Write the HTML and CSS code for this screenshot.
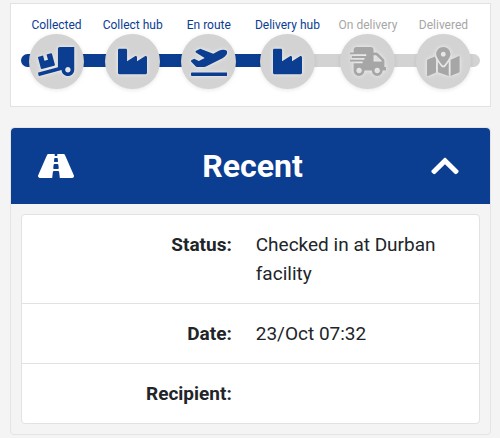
FILE: index.html
```
<!DOCTYPE html>
<html lang="en">
<head>
    <meta charset="UTF-8">
    <meta name="viewport" content="width=device-width, initial-scale=1.0">
    <title>Track shipment</title>
    <link rel="stylesheet" href="styles.css">
</head>
<body>

<section class="tracker">
    <div class="track"></div>
    <ol class="steps">
        <li class="step done">
            <span class="step-label">Collected</span>
            <span class="step-icon">
                <svg viewBox="0 0 640 512"><path d="M50.2 375.6c2.3 8.5 11.1 13.6 19.6 11.3l216.4-58c8.5-2.3 13.6-11.1 11.3-19.6l-49.7-185.5c-2.3-8.5-11.1-13.6-19.6-11.3L151 133.3l24.8 92.7-61.8 16.5-24.8-92.7-77.3 20.7C3.4 172.8-1.7 181.6.6 190.1l49.6 185.5zM384 0c-17.7 0-32 14.3-32 32v323.6L5.9 450c-4.3 1.2-6.8 5.6-5.6 9.8l12.6 46.3c1.2 4.3 5.6 6.8 9.8 5.6l393.7-107.4C418.8 464.1 467.6 512 528 512c61.9 0 112-50.1 112-112V0H384zm144 448c-26.5 0-48-21.5-48-48s21.5-48 48-48 48 21.5 48 48-21.5 48-48 48z"/></svg>
            </span>
        </li>
        <li class="step done">
            <span class="step-label">Collect hub</span>
            <span class="step-icon">
                <svg viewBox="0 0 512 512"><path d="M475.115 163.781L336 252.309v-68.28c0-18.916-20.931-30.399-36.885-20.248L160 252.309V56c0-13.255-10.745-24-24-24H24C10.745 32 0 42.745 0 56v400c0 13.255 10.745 24 24 24h464c13.255 0 24-10.745 24-24V184.029c0-18.917-20.931-30.399-36.885-20.248z"/></svg>
            </span>
        </li>
        <li class="step done">
            <span class="step-label">En route</span>
            <span class="step-icon">
                <svg viewBox="0 0 640 512"><path d="M624 448H16c-8.84 0-16 7.16-16 16v32c0 8.84 7.16 16 16 16h608c8.84 0 16-7.16 16-16v-32c0-8.84-7.16-16-16-16zM80.55 341.27c6.28 6.84 15.1 10.72 24.33 10.71l130.54-.18a65.62 65.62 0 0 0 29.64-7.12l290.96-147.65c26.74-13.57 50.71-32.94 67.02-58.31 18.31-28.48 20.3-49.09 13.07-63.65-7.21-14.57-24.74-25.27-58.25-27.45-29.85-1.94-59.54 5.92-86.28 19.48l-98.51 49.99-218.7-82.06a17.799 17.799 0 0 0-18-1.11L90.62 67.29c-10.67 5.41-13.25 19.65-5.17 28.53l156.22 98.1-103.21 52.37-72.35-36.47a17.804 17.804 0 0 0-16.07.02L9.91 230.22c-10.44 5.3-13.19 19.12-5.57 28.08l76.21 82.97z"/></svg>
            </span>
        </li>
        <li class="step done" aria-current="step">
            <span class="step-label">Delivery hub</span>
            <span class="step-icon">
                <svg viewBox="0 0 512 512"><path d="M475.115 163.781L336 252.309v-68.28c0-18.916-20.931-30.399-36.885-20.248L160 252.309V56c0-13.255-10.745-24-24-24H24C10.745 32 0 42.745 0 56v400c0 13.255 10.745 24 24 24h464c13.255 0 24-10.745 24-24V184.029c0-18.917-20.931-30.399-36.885-20.248z"/></svg>
            </span>
        </li>
        <li class="step">
            <span class="step-label">On delivery</span>
            <span class="step-icon">
                <svg viewBox="0 0 640 512"><path d="M624 352h-16V243.9c0-12.7-5.1-24.9-14.1-33.9L494 110.1c-9-9-21.2-14.1-33.9-14.1H416V48c0-26.5-21.5-48-48-48H112C85.5 0 64 21.5 64 48v48H8c-4.4 0-8 3.6-8 8v16c0 4.4 3.6 8 8 8h272c4.4 0 8 3.6 8 8v16c0 4.4-3.6 8-8 8H40c-4.4 0-8 3.6-8 8v16c0 4.4 3.6 8 8 8h208c4.4 0 8 3.6 8 8v16c0 4.4-3.6 8-8 8H8c-4.4 0-8 3.6-8 8v16c0 4.4 3.6 8 8 8h208c4.4 0 8 3.6 8 8v16c0 4.4-3.6 8-8 8H64v128c0 53 43 96 96 96s96-43 96-96h128c0 53 43 96 96 96s96-43 96-96h48c8.8 0 16-7.2 16-16v-32c0-8.8-7.2-16-16-16zM160 464c-26.5 0-48-21.5-48-48s21.5-48 48-48 48 21.5 48 48-21.5 48-48 48zm320 0c-26.5 0-48-21.5-48-48s21.5-48 48-48 48 21.5 48 48-21.5 48-48 48zm80-208H416V144h44.1l99.9 99.9V256z"/></svg>
            </span>
        </li>
        <li class="step">
            <span class="step-label">Delivered</span>
            <span class="step-icon">
                <svg viewBox="0 0 576 512"><path d="M288 0c-69.59 0-126 56.41-126 126 0 56.26 82.35 158.8 113.9 196.02 6.39 7.54 17.82 7.54 24.2 0C331.65 284.8 414 182.26 414 126 414 56.41 357.59 0 288 0zm0 168c-23.2 0-42-18.8-42-42s18.8-42 42-42 42 18.8 42 42-18.8 42-42 42zM20.12 215.95A32.006 32.006 0 0 0 0 245.66v250.32c0 11.32 11.43 19.06 21.94 14.86L160 448V214.92c-8.84-15.98-16.07-31.54-21.25-46.42L20.12 215.95zM288 359.67c-14.07 0-27.38-6.18-36.51-16.96-19.66-23.2-40.57-49.62-59.49-76.72v182l192 64V266c-18.92 27.09-39.82 53.52-59.49 76.72-9.13 10.77-22.44 16.95-36.51 16.95zm266.06-198.51L416 224v288l139.88-55.95A31.996 31.996 0 0 0 576 426.34V176.02c0-11.32-11.43-19.06-21.94-14.86z"/></svg>
            </span>
        </li>
    </ol>
</section>

<section class="card">
    <h2 class="card-heading">
        <button type="button" class="card-header" id="toggle" aria-expanded="true" aria-controls="recent">
            <svg class="road" viewBox="0 0 576 512"><path d="M573.19 402.67l-139.79-320C428.43 71.29 417.6 64 405.68 64h-97.59l2.45 23.16c.5 4.72-3.21 8.84-7.96 8.84h-29.16c-4.75 0-8.46-4.12-7.96-8.84L267.91 64h-97.59c-11.93 0-22.76 7.29-27.73 18.67L2.8 402.67C-6.45 423.86 8.31 448 30.54 448h196.84l10.31-97.68c.86-8.14 7.72-14.32 15.91-14.32h68.8c8.19 0 15.05 6.18 15.91 14.32L348.62 448h196.84c22.23 0 36.99-24.14 27.73-45.33zM260.4 135.16a8 8 0 0 1 7.96-7.16h39.29c4.09 0 7.53 3.09 7.96 7.16l4.6 43.58c.75 7.09-4.81 13.26-11.93 13.26h-40.54c-7.13 0-12.68-6.17-11.93-13.26l4.59-43.58zM315.64 304h-55.29c-9.5 0-16.91-8.23-15.91-17.68l5.07-48c.86-8.14 7.72-14.32 15.91-14.32h45.15c8.19 0 15.05 6.18 15.91 14.32l5.07 48c1 9.45-6.41 17.68-15.91 17.68z"/></svg>
            <span>Recent</span>
            <svg class="chevron" viewBox="0 0 448 512"><path d="M240.971 130.524l194.343 194.343c9.373 9.373 9.373 24.569 0 33.941l-22.667 22.667c-9.357 9.357-24.522 9.375-33.901.04L224 227.495 69.255 381.516c-9.379 9.335-24.544 9.317-33.901-.04l-22.667-22.667c-9.373-9.373-9.373-24.569 0-33.941L207.03 130.525c9.372-9.373 24.568-9.373 33.941-.001z"/></svg>
        </button>
    </h2>
    <div class="card-body" id="recent">
        <dl class="details">
            <div class="row">
                <dt>Status:</dt>
                <dd>Checked in at Durban facility</dd>
            </div>
            <div class="row">
                <dt>Date:</dt>
                <dd>23/Oct 07:32</dd>
            </div>
            <div class="row">
                <dt>Recipient:</dt>
                <dd></dd>
            </div>
        </dl>
    </div>
</section>

<script>
    var toggle = document.getElementById('toggle');
    toggle.addEventListener('click', function () {
        var body = document.getElementById('recent');
        body.hidden = !body.hidden;
        toggle.setAttribute('aria-expanded', !body.hidden);
    });
</script>

</body>
</html>
```
FILE: styles.css
```
* {
    box-sizing: border-box;
}

body {
    margin: 0;
    padding: 3px 9px 3px 10px;
    background-color: #f4f4f4;
    color: #212529;
    font-family: Roboto, sans-serif;
    font-size: 19px;
    line-height: 29px;
}

/* progress tracker */
.tracker {
    display: grid;
    padding: 12px 10px 17px;
    background-color: #ffffff;
    border: 1px solid #e2e2e2;
}

/* the bar and the steps share one grid cell */
.track,
.steps {
    grid-area: 1 / 1;
}

.track {
    align-self: end;
    height: 13px;
    margin-bottom: 22px;
    border-radius: 7px;
    background: linear-gradient(to right, #0b3d91 58%, #d3d3d3 58%);
}

.steps {
    display: flex;
    justify-content: space-between;
    margin: 0;
    padding: 0 9px 0 8px;
    list-style: none;
}

.step {
    display: flex;
    flex-direction: column;
    align-items: center;
    color: #a6a6a6;
    font-size: 12px;
    line-height: 18px;
    white-space: nowrap;
}

.step.done {
    color: #0b3d91;
}

.step-icon {
    display: flex;
    align-items: center;
    justify-content: center;
    width: 55px;
    height: 55px;
    border-radius: 50%;
    background-color: #d3d3d3;
    box-shadow: 0 1px 4px rgba(0, 0, 0, 0.1);
}

.step-icon svg {
    height: 29px;
    fill: currentColor;
    filter: drop-shadow(0 0 2px #f4f4f4);
}

/* recent event card */
.card {
    margin-top: 20px;
    border: 1px solid #e4e4e4;
    border-radius: 4px;
}

.card-heading {
    margin: 0;
}

.card-header {
    display: flex;
    align-items: center;
    justify-content: space-between;
    width: 100%;
    padding: 19px 31px 19px 27px;
    border: 0;
    border-radius: 4px 4px 0 0;
    background-color: #0b3d91;
    color: #ffffff;
    font-family: inherit;
    font-size: 32px;
    font-weight: 700;
    line-height: 38px;
    cursor: pointer;
}

.card-header svg {
    height: 32px;
    fill: currentColor;
}

.card-body {
    padding: 10px;
}

.details {
    margin: 0;
    background-color: #ffffff;
    border: 1px solid #e2e2e2;
    border-radius: 4px;
}

.row {
    display: grid;
    grid-template-columns: 48% 1fr;
    column-gap: 24px;
    padding: 15px 20px 15px 0;
}

.row + .row {
    border-top: 1px solid #e2e2e2;
}

dt {
    font-weight: 700;
    text-align: right;
}

dd {
    margin: 0;
}
```
